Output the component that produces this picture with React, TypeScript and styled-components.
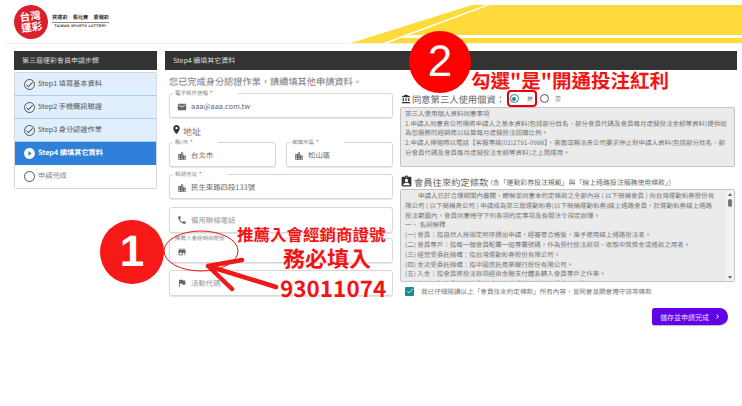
import React from 'react';
import styled, { createGlobalStyle } from 'styled-components';
import {
  MdEmail,
  MdLocationOn,
  MdLocationCity,
  MdPhone,
  MdStore,
  MdFlag,
  MdAccountBalance,
  MdAssignmentInd,
  MdCheck,
  MdChevronRight,
  MdPlayCircleFilled,
} from 'react-icons/md';

const GlobalStyle = createGlobalStyle`
  html, body {
    margin: 0;
    padding: 0;
    background: #fff;
  }
  * {
    box-sizing: border-box;
  }
  body {
    font-family: "Noto Sans CJK TC", "Liberation Sans", sans-serif;
    text-rendering: geometricPrecision;
  }
`;

const Page = styled.div`
  position: relative;
  width: 742px;
  height: 406px;
  overflow: hidden;
  background: #fff;
`;

const Header = styled.header`
  position: relative;
  height: 44px;
  margin-left: 5px;
  display: flex;
  align-items: center;
  gap: 4px;
  padding: 0 0 0 9px;
  border-bottom: 1px solid #fbf1e6;
`;

const Banner = styled.svg`
  position: absolute;
  top: 0;
  left: 335px;
`;

const LogoMark = styled.div`
  width: 34px;
  height: 34px;
  border-radius: 50%;
  background: #d9202c;
  color: #fff;
  display: flex;
  align-items: center;
  justify-content: center;
  text-align: center;
  font-size: 10.5px;
  line-height: 11px;
  font-weight: 700;
  transform: rotate(-8deg);
`;

const LogoText = styled.div`
  display: flex;
  flex-direction: column;
  align-items: center;
  color: #333;
`;

const LogoSlogan = styled.div`
  font-size: 5.2px;
  line-height: 7px;
  font-weight: 700;
  word-spacing: 4px;
  padding-bottom: 1px;
  border-bottom: 1px solid #888;
`;

const LogoEnglish = styled.div`
  font-family: "Liberation Sans", sans-serif;
  font-size: 3.5px;
  line-height: 6px;
  letter-spacing: 0.3px;
  font-weight: 700;
`;

const Body = styled.div`
  display: flex;
  gap: 8px;
  padding: 7px 5px 0 14px;
`;

const Sidebar = styled.aside`
  width: 143px;
  flex-shrink: 0;
`;

const BarTitle = styled.div`
  height: 19px;
  display: flex;
  align-items: center;
  padding-left: 8px;
  background: #333;
  color: #ddd;
  font-size: 7px;
`;

const StepList = styled.ul`
  list-style: none;
  margin: 2px 0 0;
  padding: 0;
  border: 1px solid #d4d8dc;
  border-radius: 2px;
  overflow: hidden;
`;

const Step = styled.li<{ $state: 'done' | 'active' | 'todo' }>`
  height: 23px;
  display: flex;
  align-items: center;
  gap: 3px;
  padding-left: 9px;
  font-size: 7.2px;
  font-weight: ${(p) => (p.$state === 'active' ? 700 : 400)};
  color: ${(p) => (p.$state === 'active' ? '#fff' : p.$state === 'done' ? '#555' : '#888')};
  background: ${(p) => (p.$state === 'active' ? '#2f80d8' : p.$state === 'done' ? '#e0eefd' : '#fff')};
  border-bottom: 1px solid ${(p) => (p.$state === 'done' ? '#a9cdf5' : 'transparent')};
`;

const StepRing = styled.span`
  width: 11px;
  height: 11px;
  border: 1px solid #555;
  border-radius: 50%;
  display: flex;
  align-items: center;
  justify-content: center;
  font-size: 9px;
  color: #444;
`;

const ActiveIcon = styled(MdPlayCircleFilled)`
  width: 13px;
  height: 13px;
  margin-left: -1px;
  margin-right: -1px;
  color: #fff;
`;

const Main = styled.main`
  flex: 1;
`;

const Columns = styled.div`
  display: flex;
  gap: 7px;
  padding-left: 4px;
`;

const LeftCol = styled.div`
  width: 224px;
  flex-shrink: 0;
`;

const Intro = styled.div`
  height: 21px;
  display: flex;
  align-items: center;
  font-size: 9.2px;
  color: #777;
`;

const FieldRow = styled.div`
  display: flex;
  gap: 10px;
`;

const Field = styled.fieldset<{ $gap?: number; $bare?: boolean }>`
  flex: 1;
  min-width: 0;
  height: ${(p) => (p.$bare ? 26 : 27)}px;
  margin: ${(p) => p.$gap ?? 0}px 0 0;
  padding: 0 0 0 7px;
  display: flex;
  align-items: center;
  gap: 4px;
  border: 1px solid #d8d8d8;
  border-radius: 3px;
  box-shadow: 0 1px 1px #e4e4e4;
  font-size: 7.4px;
  color: #666;
  min-inline-size: 0;
`;

const FieldLabel = styled.legend`
  padding: 0 25px 0 2px;
  margin-left: -4px;
  font-size: 5.5px;
  line-height: 5px;
  color: #888;
  white-space: nowrap;
`;

const Star = styled.span`
  color: #d81b1b;
  margin-left: 2px;
`;

const FieldIcon = styled.span`
  display: flex;
  font-size: 10px;
  color: #666;
`;

const Placeholder = styled.span`
  color: #999;
`;

const AddressTitle = styled.div`
  height: 22px;
  padding: 4px 0 0 2px;
  display: flex;
  align-items: center;
  gap: 1px;
  font-size: 9px;
  color: #777;
  svg {
    font-size: 11px;
    color: #333;
    margin-top: -4px;
  }
`;

const RightCol = styled.div`
  width: 335px;
  padding-top: 20px;
`;

const ConsentRow = styled.div`
  height: 17px;
  display: flex;
  align-items: center;
  padding-left: 1px;
  font-size: 9.3px;
  color: #666;
`;

const TitleIcon = styled.span<{ $size: number }>`
  display: flex;
  margin-right: 1px;
  font-size: ${(p) => p.$size}px;
  color: #333;
`;

const Radio = styled.span<{ $checked?: boolean }>`
  position: relative;
  flex-shrink: 0;
  width: 9px;
  height: 9px;
  border-radius: 50%;
  border: 1px solid ${(p) => (p.$checked ? '#1a8a8a' : '#555')};
  margin-left: ${(p) => (p.$checked ? 5 : 0)}px;
  &::after {
    content: '';
    position: absolute;
    inset: 1.5px;
    border-radius: 50%;
    background: ${(p) => (p.$checked ? '#1a8a8a' : 'transparent')};
  }
`;

const RadioLabel = styled.span<{ $width: number; $inset: number }>`
  flex-shrink: 0;
  width: ${(p) => p.$width}px;
  padding-left: ${(p) => p.$inset}px;
  font-size: 6px;
  color: #777;
`;

const TermsBox = styled.div`
  height: 60px;
  padding: 1px 4px;
  background: #ebebeb;
  border: 1px solid #c4c4c4;
  border-radius: 2px;
  font-size: 6.5px;
  line-height: 9.7px;
  color: #777;
`;

const AgreementTitle = styled.div`
  height: 22px;
  display: flex;
  align-items: center;
  padding: 7px 0 0 0;
  font-size: 9.3px;
  color: #666;
`;

const AgreementNote = styled.span`
  margin-left: 2px;
  font-size: 6.9px;
`;

const ScrollBox = styled.div`
  height: 93px;
  display: flex;
  background: #ebebeb;
  border: 1px solid #c4c4c4;
  border-radius: 2px;
  overflow: hidden;
`;

const ScrollText = styled.div`
  flex: 1;
  padding: 1px 4px;
  font-size: 6.5px;
  line-height: 9.8px;
  color: #777;
`;

const ScrollLead = styled.div`
  text-indent: 13px;
  white-space: nowrap;
`;

const ScrollTrack = styled.div`
  width: 8px;
  padding: 3px 0 2px;
  display: flex;
  flex-direction: column;
  align-items: center;
  background: #f3f3f3;
`;

const ScrollArrow = styled.span<{ $down?: boolean }>`
  width: 0;
  height: 0;
  border-left: 2.5px solid transparent;
  border-right: 2.5px solid transparent;
  ${(p) => (p.$down ? 'border-top: 3px solid #666; margin-top: auto;' : 'border-bottom: 3px solid #666;')}
`;

const ScrollThumb = styled.span`
  width: 4px;
  height: 8px;
  margin-top: 3px;
  border-radius: 2px;
  background: #777;
`;

const AgreeRow = styled.label`
  height: 18px;
  display: flex;
  align-items: center;
  gap: 7px;
  padding-left: 5px;
  font-size: 6.6px;
  color: #777;
`;

const CheckBox = styled.span`
  width: 9px;
  height: 9px;
  display: flex;
  align-items: center;
  justify-content: center;
  background: #1a8a8a;
  color: #fff;
  font-size: 8px;
  border-radius: 1px;
`;

const Actions = styled.div`
  display: flex;
  justify-content: flex-end;
  padding: 8px 7px 0 0;
`;

const SubmitButton = styled.button`
  width: 76px;
  height: 17px;
  padding: 0 6px 0 8px;
  display: flex;
  align-items: center;
  justify-content: space-between;
  border: 0;
  border-radius: 3px 9px 9px 3px;
  background: #6200ea;
  color: #e8dcff;
  font-family: inherit;
  font-size: 7px;
  box-shadow: 0 1px 1px #bbb;
  svg {
    font-size: 9px;
    color: #fff;
  }
`;

const NumberBadge = styled.div<{ $x: number; $y: number; $size: number; $bg: string; $weight: number }>`
  position: absolute;
  left: ${(p) => p.$x}px;
  top: ${(p) => p.$y}px;
  width: ${(p) => p.$size}px;
  height: ${(p) => p.$size}px;
  border-radius: 50%;
  background: ${(p) => p.$bg};
  color: #fff;
  display: flex;
  align-items: center;
  justify-content: center;
  font-family: "Liberation Sans", sans-serif;
  font-size: 44px;
  font-weight: ${(p) => p.$weight};
  line-height: 1;
`;

const Callout = styled.div<{ $x: number; $y: number; $size: number }>`
  position: absolute;
  left: ${(p) => p.$x}px;
  top: ${(p) => p.$y}px;
  font-size: ${(p) => p.$size}px;
  line-height: 1;
  font-weight: 700;
  color: #f01414;
  white-space: nowrap;
  text-shadow: 0 0 2px #fff, 0 0 2px #fff;
`;

const RadioHighlight = styled.div`
  position: absolute;
  left: 507px;
  top: 90px;
  width: 30px;
  height: 17px;
  border: 2px solid #e8000f;
  border-radius: 4px;
`;

const Markup = styled.svg`
  position: absolute;
  left: 0;
  top: 0;
  pointer-events: none;
`;

const steps: { label: string; state: 'done' | 'active' | 'todo' }[] = [
  { label: 'Step1 填寫基本資料', state: 'done' },
  { label: 'Step2 手機簡訊驗證', state: 'done' },
  { label: 'Step3 身分認證作業', state: 'done' },
  { label: 'Step4 續填其它資料', state: 'active' },
  { label: '申請完成', state: 'todo' },
];

const App: React.FC = () => {
  return (
    <Page>
      <GlobalStyle />
      <Header>
        <LogoMark>
          台灣
          <br />
          運彩
        </LogoMark>
        <LogoText>
          <LogoSlogan>買運彩 看比賽 愛報彩</LogoSlogan>
          <LogoEnglish>TAIWAN SPORTS LOTTERY</LogoEnglish>
        </LogoText>
        <Banner width="402" height="44" viewBox="335 0 402 44">
          <polygon points="346,43 467,5 481,5 378,43" fill="#fedb3a" />
          <polygon points="404,35 485,5 737,5 737,35" fill="#fedb3a" />
          <polygon points="396,38 737,38 737,43 383,43" fill="#fedb3a" />
        </Banner>
      </Header>
      <Body>
        <Sidebar>
          <BarTitle>第三屆運彩會員申請步驟</BarTitle>
          <StepList>
            {steps.map((s) => (
              <Step key={s.label} $state={s.state}>
                {s.state === 'active' ? (
                  <ActiveIcon />
                ) : (
                  <StepRing>{s.state === 'done' && <MdCheck />}</StepRing>
                )}
                {s.label}
              </Step>
            ))}
          </StepList>
        </Sidebar>
        <Main>
          <BarTitle>Step4 續填其它資料</BarTitle>
          <Columns>
            <LeftCol>
              <Intro>您已完成身分認證作業，請續填其他申請資料。</Intro>
              <Field>
                <FieldLabel>
                  電子郵件信箱<Star>*</Star>
                </FieldLabel>
                <FieldIcon>
                  <MdEmail />
                </FieldIcon>
                aaa@aaa.com.tw
              </Field>
              <AddressTitle>
                <MdLocationOn />
                地址
              </AddressTitle>
              <FieldRow>
                <Field>
                  <FieldLabel>
                    縣/市<Star>*</Star>
                  </FieldLabel>
                  <FieldIcon>
                    <MdLocationCity />
                  </FieldIcon>
                  台北市
                </Field>
                <Field>
                  <FieldLabel>
                    鄉鎮市區<Star>*</Star>
                  </FieldLabel>
                  <FieldIcon>
                    <MdLocationCity />
                  </FieldIcon>
                  松山區
                </Field>
              </FieldRow>
              <Field $gap={5}>
                <FieldLabel>
                  郵遞地址<Star>*</Star>
                </FieldLabel>
                <FieldIcon>
                  <MdLocationCity />
                </FieldIcon>
                民生東路四段133號
              </Field>
              <Field $gap={8} $bare>
                <FieldIcon>
                  <MdPhone />
                </FieldIcon>
                <Placeholder>備用聯絡電話</Placeholder>
              </Field>
              <Field $gap={3}>
                <FieldLabel>推薦人會經銷商證號</FieldLabel>
                <FieldIcon>
                  <MdStore />
                </FieldIcon>
              </Field>
              <Field $gap={7} $bare>
                <FieldIcon>
                  <MdFlag />
                </FieldIcon>
                <Placeholder>活動代碼</Placeholder>
              </Field>
            </LeftCol>
            <RightCol>
              <ConsentRow>
                <TitleIcon $size={10}>
                  <MdAccountBalance />
                </TitleIcon>
                同意第三人使用個資：
                <Radio $checked />
                <RadioLabel $width={21} $inset={8}>
                  是
                </RadioLabel>
                <Radio />
                <RadioLabel $width={20} $inset={6}>
                  否
                </RadioLabel>
              </ConsentRow>
              <TermsBox>
                第三人使用個人資料同意事項
                <br />
                1.申請人同意貴公司得將申請人之基本資料(包括部分姓名、部分會員代碼及會員每月虛擬投注金額等資料)提供給為您服務的經銷商以結算每月虛擬投注回饋比例。
                <br />
                2.申請人得隨時以電話【客服專線(02)2791-0988】、書面或親洽貴公司要求停止對申請人資料(包括部分姓名、部分會員代碼及會員每月虛擬投注金額等資料)之上開運用。
              </TermsBox>
              <AgreementTitle>
                <TitleIcon $size={13}>
                  <MdAssignmentInd />
                </TitleIcon>
                會員往來約定條款
                <AgreementNote>(含「運動彩券投注規範」與「線上通路投注服務使用條款」)</AgreementNote>
              </AgreementTitle>
              <ScrollBox>
                <ScrollText>
                  <ScrollLead>申請人已於合理期間內審閱、瞭解並同意本約定條款之全部內容 ( 以下簡稱會員 ) 向台灣運動彩券股份有</ScrollLead>
                  限公司 ( 以下簡稱貴公司 ) 申請成為第三屆運動彩券(以下簡稱運動彩券)線上通路會員，於運動彩券線上通路
                  <br />
                  投注範圍內，會員同意遵守下列各項約定事項及有關法令規定辦理。
                  <br />
                  一、 名詞解釋
                  <br />
                  (一) 會員：指自然人按規定程序提出申請，經審查合格後，准予使用線上通路投注者。
                  <br />
                  (二) 會員專戶：指每一個會員配屬一組專屬號碼，作為預付投注款項、收取中獎獎金或退款之用者。
                  <br />
                  (三) 經營受委託機構：指台灣運動彩券股份有限公司。
                  <br />
                  (四) 金流受委託機構：指中國信託商業銀行股份有限公司。
                  <br />
                  (五) 入金：指會員將投注款項經由金融支付體系轉入會員專戶之作業。
                  <br />
                  (六) 出金：指會員將其會員專戶中之款項轉入其約定帳戶之作業。
                </ScrollText>
                <ScrollTrack>
                  <ScrollArrow />
                  <ScrollThumb />
                  <ScrollArrow $down />
                </ScrollTrack>
              </ScrollBox>
              <AgreeRow>
                <CheckBox>
                  <MdCheck />
                </CheckBox>
                我已仔細閱讀以上「會員往來約定條款」所有內容，並同意並願意遵守該等條款
              </AgreeRow>
              <Actions>
                <SubmitButton>
                  儲存並申請完成
                  <MdChevronRight />
                </SubmitButton>
              </Actions>
            </RightCol>
          </Columns>
        </Main>
      </Body>

      <NumberBadge $x={409} $y={31} $size={62} $bg="#fe0000" $weight={400}>
        2
      </NumberBadge>
      <Callout $x={471} $y={70} $size={19.5}>
        勾選"是"開通投注紅利
      </Callout>
      <RadioHighlight />
      <NumberBadge $x={100} $y={220} $size={64} $bg="#f71818" $weight={700}>
        1
      </NumberBadge>
      <Markup width="742" height="406" viewBox="0 0 742 406">
        <ellipse cx="201" cy="251" rx="37" ry="20" fill="none" stroke="#e81414" strokeWidth="1" />
        <path
          d="M276 287 L208 266 M208 266 L242 260 M208 266 L232 289"
          fill="none"
          stroke="#f01818"
          strokeWidth="4.5"
          strokeLinecap="round"
          strokeLinejoin="round"
        />
      </Markup>
      <Callout $x={237} $y={226} $size={16.5}>
        推薦入會經銷商證號
      </Callout>
      <Callout $x={283} $y={247} $size={22}>
        務必填入
      </Callout>
      <Callout $x={280} $y={277} $size={22.5}>
        93011074
      </Callout>
    </Page>
  );
};

export default App;
